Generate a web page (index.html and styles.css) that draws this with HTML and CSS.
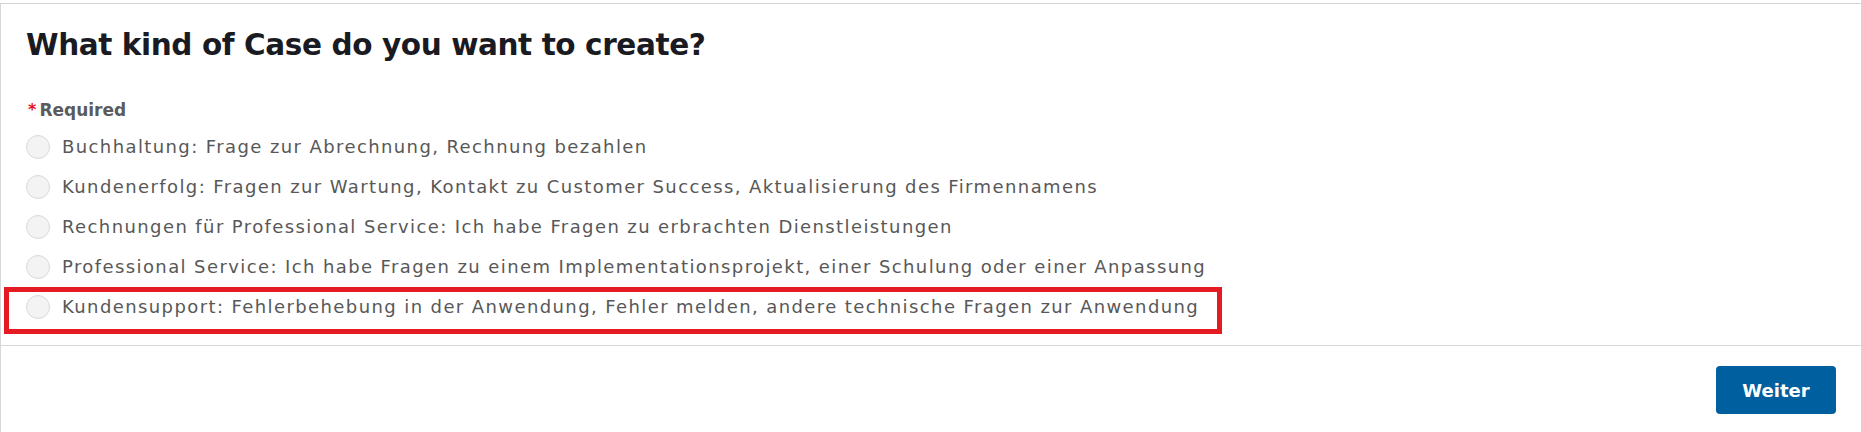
FILE: index.html
```html
<!DOCTYPE html>
<html lang="de">
<head>
<meta charset="utf-8">
<title>What kind of Case do you want to create?</title>
<link rel="stylesheet" href="styles.css">
</head>
<body>
<div class="panel">
  <section class="panel-body">
    <h1 class="title">What kind of Case do you want to create?</h1>
    <div class="required"><span class="star">*</span>Required</div>
    <ul class="options">
      <li class="option"><span class="radio"></span><span class="label">Buchhaltung: Frage zur Abrechnung, Rechnung bezahlen</span></li>
      <li class="option"><span class="radio"></span><span class="label">Kundenerfolg: Fragen zur Wartung, Kontakt zu Customer Success, Aktualisierung des Firmennamens</span></li>
      <li class="option"><span class="radio"></span><span class="label">Rechnungen für Professional Service: Ich habe Fragen zu erbrachten Dienstleistungen</span></li>
      <li class="option"><span class="radio"></span><span class="label">Professional Service: Ich habe Fragen zu einem Implementationsprojekt, einer Schulung oder einer Anpassung</span></li>
      <li class="option highlighted"><span class="radio"></span><span class="label">Kundensupport: Fehlerbehebung in der Anwendung, Fehler melden, andere technische Fragen zur Anwendung</span></li>
    </ul>
  </section>
  <footer class="panel-footer">
    <button class="btn-next" type="button">Weiter</button>
  </footer>
</div>
</body>
</html>
```
FILE: styles.css
```css
html, body {
  margin: 0;
  padding: 0;
  background: #ffffff;
}

.panel {
  margin-top: 3px;
  height: 429px;
  box-sizing: border-box;
  border-top: 1px solid #d6d6d6;
  border-left: 1px solid #d6d6d6;
  display: flex;
  flex-direction: column;
}

.panel-body {
  padding: 21px 0 18px 22px;
  border-bottom: 1px solid #d8d8d8;
}

.title {
  margin: 0 0 0 3px;
  font-family: "DejaVu Sans", sans-serif;
  font-weight: 700;
  font-size: 29.5px;
  line-height: 40px;
  letter-spacing: -0.4px;
  color: #1a1a22;
}

.required {
  margin: 33px 0 5px 5px;
  font-family: "DejaVu Sans", sans-serif;
  font-weight: 700;
  font-size: 17px;
  line-height: 24px;
  color: #5b5b5b;
}

.star {
  color: #e5141b;
  font-size: 16px;
  margin-right: 3px;
  vertical-align: 1px;
}

.options {
  list-style: none;
  margin: 0;
  padding: 0;
}

.option {
  display: flex;
  align-items: center;
  height: 40px;
  padding-left: 3px;
}

.radio {
  width: 24px;
  height: 24px;
  box-sizing: border-box;
  border-radius: 50%;
  background: #f3f3f3;
  border: 1px solid #d9d9d9;
  flex: none;
}

.label {
  margin-left: 12px;
  font-family: "DejaVu Sans", sans-serif;
  font-size: 18px;
  line-height: 40px;
  letter-spacing: 1.4px;
  color: #585858;
  white-space: nowrap;
}

.highlighted {
  position: relative;
}

.highlighted::after {
  content: "";
  position: absolute;
  left: -19px;
  top: 0;
  width: 1218px;
  height: 47px;
  box-sizing: border-box;
  border: 5px solid #e41b22;
  pointer-events: none;
}

.panel-footer {
  flex: 1;
  display: flex;
  justify-content: flex-end;
  align-items: flex-start;
  padding: 20px 25px 0 0;
}

.btn-next {
  width: 120px;
  height: 48px;
  border: none;
  border-radius: 4px;
  background: #005f9e;
  color: #ffffff;
  font-family: "DejaVu Sans", sans-serif;
  font-weight: 700;
  font-size: 18px;
  padding: 0;
  cursor: pointer;
}
```
